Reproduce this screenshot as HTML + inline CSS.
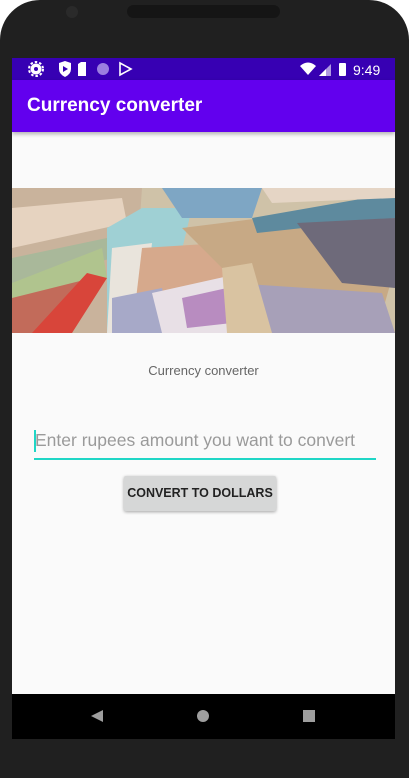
<!DOCTYPE html>
<html><head><style>
body{margin:0;width:411px;height:778px;background:#fff;overflow:hidden;font-family:"Liberation Sans",sans-serif;position:relative}
.frame{position:absolute;left:0;top:0;width:409px;height:778px;background:#202020;border-radius:40px 40px 0 0}
.scr{position:absolute;left:12px;top:58px;width:383px;height:681px;background:#fafafa;overflow:hidden}
.sb{height:22px;background:#3700b3;position:relative;color:#fff}
.ab{height:52px;background:#6200ee;color:#fff;font-size:19px;font-weight:bold;line-height:52px;padding-left:15px;box-shadow:0 2px 4px rgba(0,0,0,.3);position:relative}
.nav{position:absolute;left:0;top:636px;width:383px;height:45px;background:#000}
</style></head><body>
<div class="frame">
<div style="position:absolute;left:66px;top:6px;width:12px;height:12px;border-radius:50%;background:#2a2a2a"></div>
<div style="position:absolute;left:127px;top:5px;width:153px;height:13px;border-radius:7px;background:#151515"></div>
<div class="scr">
<div class="sb">
<svg width="383" height="22" style="position:absolute;left:0;top:0">
<circle cx="24" cy="11" r="5.5" fill="#fff"/><circle cx="24" cy="11" r="7" fill="none" stroke="#fff" stroke-width="2" stroke-dasharray="2.5 2"/><circle cx="24" cy="11" r="2" fill="#3700b3"/>
<path d="M47 5 L53 3 L59 5 L59 11 Q59 16 53 19 Q47 16 47 11Z" fill="#fff"/><path d="M51 8 L56 11 L51 14Z" fill="#3700b3"/>
<path d="M66 6 L69 4 L74 4 L74 18 L66 18Z" fill="#fff"/>
<circle cx="91" cy="11" r="6" fill="#9b7fe0"/>
<path d="M108 5 L119 11 L108 17Z" fill="none" stroke="#fff" stroke-width="1.6"/>
<path d="M288 8 Q296 1 304 8 L296 17Z" fill="#fff"/>
<path d="M307 18 L319 6 L319 18Z" fill="#fff" opacity=".6"/><path d="M307 18 L314 11 L314 18Z" fill="#fff"/>
<rect x="327" y="5" width="7" height="13" rx="1" fill="#fff"/>
<text x="341" y="17" fill="#fff" font-size="14" font-family="Liberation Sans">9:49</text>
</svg></div>
<div class="ab">Currency converter</div>
<svg width="383" height="145" style="position:absolute;left:0;top:130px">
<rect width="383" height="145" fill="#cfc2a8"/>
<polygon points="0,0 130,0 120,145 0,145" fill="#c9b39c"/>
<polygon points="0,20 110,10 115,35 0,60" fill="#e6d3c0"/>
<polygon points="0,70 95,50 100,70 0,100" fill="#a9b89a"/>
<polygon points="0,95 90,60 95,90 0,130" fill="#b0c48e"/>
<polygon points="0,110 80,90 60,145 0,145" fill="#c26b5a"/>
<polygon points="20,145 75,85 95,90 60,145" fill="#d8453a"/>
<polygon points="95,40 130,20 180,20 150,145 95,145" fill="#9fd0d4"/>
<polygon points="100,60 140,55 130,145 95,145" fill="#e9e4dc"/>
<polygon points="150,0 250,0 240,30 170,30" fill="#7ea6c4"/>
<polygon points="130,60 210,55 220,120 120,145" fill="#d6a98c"/>
<polygon points="100,110 150,100 160,145 100,145" fill="#a7a9c8"/>
<polygon points="140,105 230,85 250,145 150,145" fill="#e8e0e6"/>
<polygon points="170,110 215,100 220,135 175,140" fill="#b88cc0"/>
<polygon points="170,40 290,25 380,90 370,125 230,100" fill="#c7a985"/>
<polygon points="240,30 383,5 383,30 245,45" fill="#5e8a9e"/>
<polygon points="285,35 383,30 383,100 330,95" fill="#6e6a7a"/>
<polygon points="220,95 370,105 383,145 230,145" fill="#a7a0b8"/>
<polygon points="210,80 240,75 260,145 215,145" fill="#d9c3a1"/>
<polygon points="250,0 383,0 383,10 260,15" fill="#e5d5c5"/>
</svg>
<div style="position:absolute;left:0;top:305px;width:383px;text-align:center;font-size:13px;color:#666">Currency converter</div>
<div style="position:absolute;left:22px;top:372px;width:2px;height:22px;background:#1fd6c6"></div>
<div style="position:absolute;left:23px;top:372px;font-size:17.5px;color:#9a9a9a">Enter rupees amount you want to convert</div>
<div style="position:absolute;left:22px;top:400px;width:342px;height:2px;background:#1fd6c6"></div>
<div style="position:absolute;left:112px;top:418px;width:152px;height:35px;background:#d6d7d7;box-shadow:0 1px 3px rgba(0,0,0,.35);border-radius:2px;text-align:center;line-height:35px;font-size:12.5px;font-weight:bold;color:#222">CONVERT TO DOLLARS</div>
<div class="nav">
<svg width="383" height="45"><path d="M79 22 L91 16 L91 28Z" fill="#9e9e9e"/><circle cx="191" cy="22" r="6" fill="#9e9e9e"/><rect x="291" y="16" width="12" height="12" fill="#9e9e9e"/></svg>
</div>
</div></div>
</body></html>
